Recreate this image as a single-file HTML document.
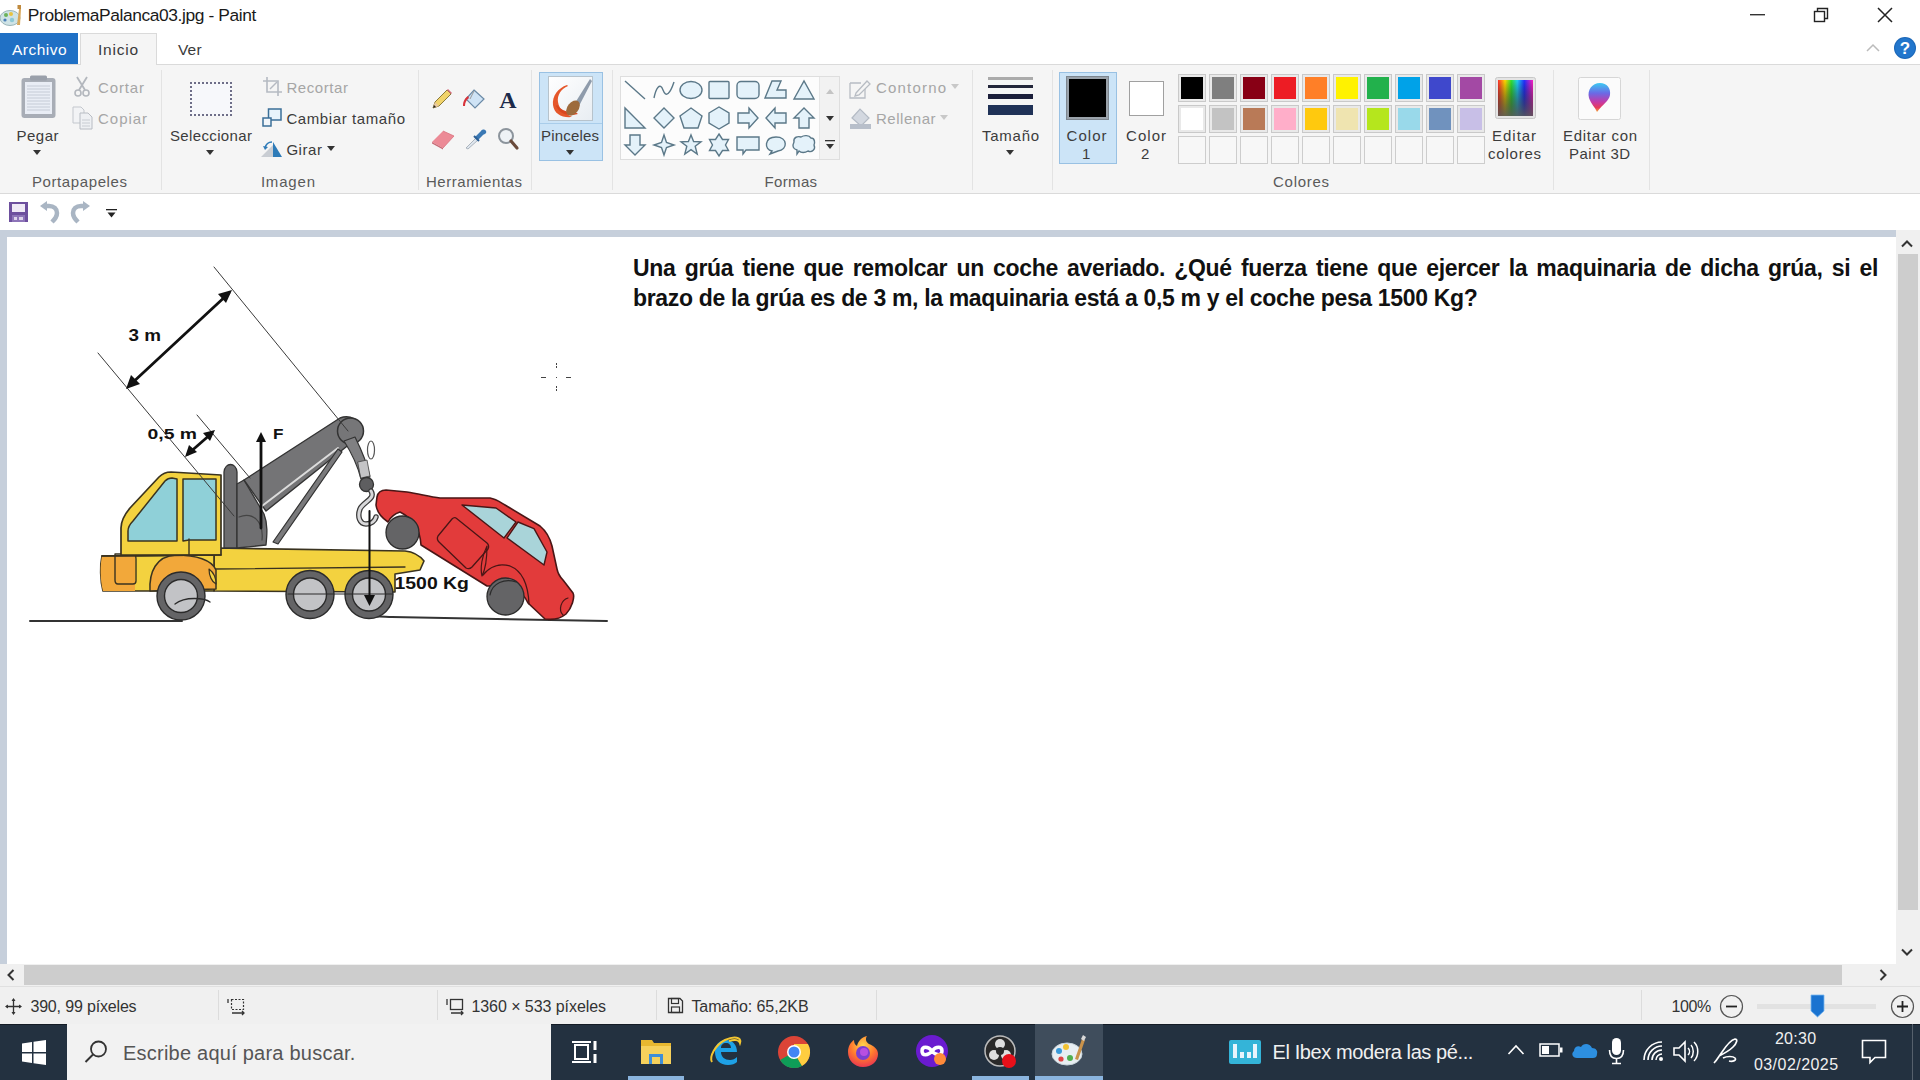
<!DOCTYPE html>
<html><head><meta charset="utf-8">
<style>
*{box-sizing:border-box;margin:0;padding:0}
html,body{width:1920px;height:1080px;overflow:hidden;background:#fff;font-family:"Liberation Sans",sans-serif;color:#222}
.a{position:absolute}
.t{position:absolute;white-space:pre;line-height:1}
svg{position:absolute;overflow:visible}
#title{left:0;top:0;width:1920px;height:33px;background:#fff}
#tabs{left:0;top:33px;width:1920px;height:32px;background:#fff}
#ribbon{left:0;top:64px;width:1920px;height:130px;background:#f5f5f5;border-top:1px solid #dadada;border-bottom:1px solid #dadada}
#qat{left:0;top:194px;width:1920px;height:36px;background:#fff}
#work{left:0;top:230px;width:1896px;height:734px;background:#c6cfdb}
#canvas{left:7px;top:237px;width:1889px;height:727px;background:#fff}
#vscroll{left:1896px;top:230px;width:24px;height:734px;background:#f0f0f0}
#hscroll{left:0;top:964px;width:1920px;height:22px;background:#f0f0f0}
#status{left:0;top:986px;width:1920px;height:38px;background:#f0f0f0;border-top:1px solid #e2e2e2}
#taskbar{left:0;top:1024px;width:1920px;height:56px;background:#233140;border-top:1px solid #141c26}

</style></head><body>
<div id="title" class="a"></div>
<div id="tabs" class="a"></div>
<div id="ribbon" class="a"></div>
<div id="qat" class="a"></div>
<div id="work" class="a"></div>
<div id="canvas" class="a"></div>
<div id="vscroll" class="a"></div>
<div id="hscroll" class="a"></div>
<div id="status" class="a"></div>
<div id="taskbar" class="a"></div>
<!-- title bar -->
<svg style="left:0;top:3px" width="24" height="24" viewBox="0 0 24 24">
 <ellipse cx="10" cy="15" rx="10" ry="7.5" fill="#cfe3e6" stroke="#9bb5b8" stroke-width="1"/>
 <circle cx="6" cy="12" r="2" fill="#6bb35a"/><circle cx="11" cy="11" r="2" fill="#e8c341"/><circle cx="5" cy="17" r="1.6" fill="#4a7fb8"/><circle cx="12" cy="17" r="2.2" fill="#8ec9d6"/>
 <path d="M17 22 L19 6 L21 6 L20 22 Z" fill="#d8a85a"/><rect x="17.5" y="2" width="3.5" height="4" fill="#c08a3e"/>
</svg>
<svg style="left:1750px;top:14px" width="15" height="2"><rect width="15" height="1.4" fill="#333"/></svg>
<svg style="left:1813px;top:7px" width="16" height="15" viewBox="0 0 16 15"><rect x="1.5" y="4.5" width="10" height="10" fill="none" stroke="#222" stroke-width="1.4"/><path d="M4.5 4.5 V1.5 H14.5 V11.5 H11.5" fill="none" stroke="#222" stroke-width="1.4"/></svg>
<svg style="left:1877px;top:7px" width="16" height="16" viewBox="0 0 16 16"><path d="M1 1 L15 15 M15 1 L1 15" stroke="#222" stroke-width="1.5"/></svg>
<!-- tabs -->
<div class="a" style="left:0;top:33px;width:78px;height:31px;background:#1f70c5"></div>
<div class="a" style="left:80px;top:33px;width:77px;height:32px;background:#f5f5f5;border:1px solid #dadada;border-bottom:none"></div>
<svg style="left:1866px;top:43px" width="14" height="9" viewBox="0 0 14 9"><path d="M1 8 L7 2 L13 8" fill="none" stroke="#bbb" stroke-width="1.5"/></svg>
<svg style="left:1893px;top:36px" width="24" height="24" viewBox="0 0 24 24"><circle cx="12" cy="12" r="11" fill="#1b67b8"/><circle cx="12" cy="12" r="10" fill="#2276cc"/><text x="12" y="18" text-anchor="middle" font-family="Liberation Sans" font-weight="bold" font-size="17" fill="#fff">?</text></svg>
<!-- ribbon group separators -->
<div class="a" style="left:161px;top:70px;width:1px;height:120px;background:#e3e3e3"></div>
<div class="a" style="left:418px;top:70px;width:1px;height:120px;background:#e3e3e3"></div>
<div class="a" style="left:531px;top:70px;width:1px;height:120px;background:#e3e3e3"></div>
<div class="a" style="left:612px;top:70px;width:1px;height:120px;background:#e3e3e3"></div>
<div class="a" style="left:972px;top:70px;width:1px;height:120px;background:#e3e3e3"></div>
<div class="a" style="left:1052px;top:70px;width:1px;height:120px;background:#e3e3e3"></div>
<div class="a" style="left:1553px;top:70px;width:1px;height:120px;background:#e3e3e3"></div>
<div class="a" style="left:1649px;top:70px;width:1px;height:120px;background:#e3e3e3"></div>
<!-- Portapapeles -->
<svg style="left:21px;top:75px" width="36" height="44" viewBox="0 0 36 44">
 <rect x="0.5" y="3" width="34" height="40" rx="3" fill="#a8adb6"/>
 <rect x="4" y="7" width="27" height="32" fill="#e9edf5"/>
 <g stroke="#c5cbd6" stroke-width="1"><path d="M6 11H29M6 14H29M6 17H29M6 20H29M6 23H29M6 26H29M6 29H29M6 32H29M6 35H29"/></g>
 <rect x="9" y="0.5" width="17" height="5" rx="1.5" fill="#9aa0aa"/>
</svg>
<svg style="left:33px;top:150px" width="8" height="5"><path d="M0 0H8L4 5Z" fill="#333"/></svg>
<svg style="left:74px;top:76px" width="16" height="21" viewBox="0 0 16 21"><path d="M3 1 L11 14 M13 1 L5 14" stroke="#b3b7bd" stroke-width="1.8"/><circle cx="4" cy="17" r="3" fill="none" stroke="#b3b7bd" stroke-width="1.6"/><circle cx="12" cy="17" r="3" fill="none" stroke="#b3b7bd" stroke-width="1.6"/></svg>
<svg style="left:72px;top:106px" width="22" height="24" viewBox="0 0 22 24"><path d="M1 1H9L12 4V17H1Z" fill="#f2f3f5" stroke="#c3c7cd"/><path d="M8 7H16L20 11V23H8Z" fill="#eef0f3" stroke="#b8bcc3"/><path d="M10 14H18M10 17H18M10 20H18" stroke="#c8ccd2"/></svg>
<!-- Imagen -->
<div class="a" style="left:190px;top:82px;width:42px;height:34px;border:2px dotted #6e6e88;background:#f7f8fb"></div>
<svg style="left:206px;top:150px" width="8" height="5"><path d="M0 0H8L4 5Z" fill="#333"/></svg>
<svg style="left:263px;top:77px" width="19" height="19" viewBox="0 0 19 19"><path d="M4 0V15H19M0 4H15V19" fill="none" stroke="#b5bac2" stroke-width="1.6"/><path d="M7 12L14 5" stroke="#b5bac2" stroke-width="1.4"/></svg>
<svg style="left:262px;top:108px" width="20" height="19" viewBox="0 0 20 19"><rect x="6.5" y="1" width="12.5" height="11" fill="#e8f4fb" stroke="#3b6f98" stroke-width="1.5"/><rect x="1" y="10" width="8" height="8" fill="#f2f6fa" stroke="#3b6f98" stroke-width="1.5"/></svg>
<svg style="left:261px;top:140px" width="22" height="18" viewBox="0 0 22 18"><path d="M0 17L12 5V17Z" fill="#c9cdd3"/><path d="M12 17V2L21 17Z" fill="#2e7bb8"/><path d="M4 8C5 4 8 2 11 2" fill="none" stroke="#2e7bb8" stroke-width="1.6"/><path d="M2 6L4 10L7 7Z" fill="#2e7bb8"/></svg>
<svg style="left:327px;top:146px" width="8" height="5"><path d="M0 0H8L4 5Z" fill="#333"/></svg>
<!-- QAT -->
<svg style="left:9px;top:202px" width="19" height="20" viewBox="0 0 19 20"><path d="M0 0 H19 V20 H0Z" fill="#6d4f9e"/><rect x="3" y="2" width="13" height="8" fill="#efe9f6"/><rect x="3" y="13" width="13" height="7" fill="#8d74b8"/><rect x="5" y="15" width="3" height="3" fill="#ddd3ec"/><rect x="10" y="15" width="4" height="3" fill="#ddd3ec"/></svg>
<svg style="left:40px;top:201px" width="20" height="22" viewBox="0 0 20 22"><path d="M5 5 H9 C14 5 17 8 17 12 C17 16 15 18 12 21" fill="none" stroke="#a9b5c3" stroke-width="4.5"/><path d="M0 5 L7 0 V10Z" fill="#a9b5c3"/></svg>
<svg style="left:70px;top:201px" width="20" height="22" viewBox="0 0 20 22"><path d="M15 5 H11 C6 5 3 8 3 12 C3 16 5 18 8 21" fill="none" stroke="#a9b5c3" stroke-width="4.5"/><path d="M20 5 L13 0 V10Z" fill="#a9b5c3"/></svg>
<svg style="left:106px;top:209px" width="11" height="9" viewBox="0 0 11 9"><rect x="0" y="0" width="11" height="1.3" fill="#222"/><path d="M1.5 3.5 H9.5 L5.5 8.5Z" fill="#222"/></svg>

<svg style="left:431px;top:88px" width="22" height="22" viewBox="0 0 22 22"><path d="M2 20 L4 14 L16 2 L20 6 L8 18 Z" fill="#f1d36b" stroke="#8a7a3a" stroke-width="1"/><path d="M16 2 L20 6 L21 5 L17 1 Z" fill="#d46b7a"/><path d="M2 20 L4 14 L8 18 Z" fill="#e9c9a0"/><path d="M2 20 L3 17 L5 19Z" fill="#222"/></svg>
<svg style="left:462px;top:87px" width="25" height="23" viewBox="0 0 25 23"><path d="M12 3 L22 12 L13 21 L4 12 Z" fill="#cfe3f5" stroke="#6b8aa6" stroke-width="1.2"/><path d="M8 12 L12 4" stroke="#999" stroke-width="1"/><path d="M1 19 C1 14 3 11 6 9 L7 11 C4 13 3 16 3 19 Z" fill="#d8333a"/></svg>
<svg style="left:497px;top:89px" width="22" height="20" viewBox="0 0 22 20"><text x="11" y="19" text-anchor="middle" font-family="Liberation Serif" font-weight="bold" font-size="24" fill="#1c2a4a">A</text></svg>
<svg style="left:431px;top:128px" width="24" height="22" viewBox="0 0 24 22"><path d="M1 14 L12 3 L23 8 L12 20 Z" fill="#ec8a96"/><path d="M1 14 L12 20 L12 21.5 L1 15.5Z" fill="#c76a75"/><path d="M12 3 L23 8 L12 20" fill="none" stroke="#d9707c" stroke-width="0.8"/></svg>
<svg style="left:464px;top:127px" width="23" height="23" viewBox="0 0 23 23"><path d="M2 21 L12 11 L14 13 L4 22Z" fill="#dfe6ee" stroke="#9aa4b0" stroke-width="0.8"/><path d="M11 10 L17 4 C18 2 21 2 22 4 C23 6 21 7 19 8 L14 13Z" fill="#3a78b4"/><path d="M10 9 L15 14" stroke="#2c5f94" stroke-width="2"/></svg>
<svg style="left:497px;top:127px" width="22" height="24" viewBox="0 0 22 24"><circle cx="9" cy="9" r="7" fill="#eef2f6" stroke="#8c949c" stroke-width="2"/><path d="M14 14 L20 21" stroke="#6a4a3a" stroke-width="3.2" stroke-linecap="round"/></svg>
<div class="a" style="left:539px;top:72px;width:64px;height:89px;background:#cce4f7;border:1px solid #99c1e3"></div>
<div class="a" style="left:540px;top:123px;width:62px;height:1px;background:#a9cdea"></div>
<svg style="left:548px;top:76px" width="45" height="45" viewBox="0 0 45 45"><defs><linearGradient id="bw" x1="0" y1="0" x2="1" y2="1"><stop offset="0" stop-color="#ffffff"/><stop offset="1" stop-color="#e8edf2"/></linearGradient></defs><rect x="0.5" y="0.5" width="44" height="44" fill="url(#bw)" stroke="#b7c3cc"/><path d="M19 9 C10 12 4 20 5 29 C6 38 14 42 24 41 C18 38 11 34 10 26 C9 19 13 13 20 10Z" fill="#e5572b"/><path d="M8 30 C12 38 20 41 30 38 L26 35 C20 37 14 35 9 29Z" fill="#d9471f"/><path d="M27 27 L42 3 L44 5 L31 30Z" fill="#8e9bab"/><ellipse cx="25" cy="32" rx="8.5" ry="5.5" transform="rotate(-52 25 32)" fill="#9d6b3d"/></svg>
<svg style="left:566px;top:150px" width="8" height="5"><path d="M0 0H8L4 5Z" fill="#333"/></svg>
<div class="a" style="left:620px;top:76px;width:220px;height:84px;background:#fcfcfc;border:1px solid #dedede"></div>
<div class="a" style="left:819px;top:77px;width:20px;height:82px;background:#f2f2f2;border-left:1px solid #e6e6e6"></div>
<svg style="left:826px;top:89px" width="8" height="5"><path d="M0 5H8L4 0Z" fill="#c4c4c4"/></svg>
<svg style="left:826px;top:116px" width="8" height="5"><path d="M0 0H8L4 5Z" fill="#333"/></svg>
<svg style="left:825px;top:140px" width="10" height="10"><rect x="0" y="0" width="10" height="1.3" fill="#333"/><path d="M1 4H9L5 9Z" fill="#333"/></svg>
<svg style="left:623.00px;top:77.60px" width="24" height="24" viewBox="-12 -12 24 24"><path d="M-10 -9 L10 9" stroke="#5b7888" stroke-width="1.4"/></svg>
<svg style="left:651.75px;top:77.60px" width="24" height="24" viewBox="-12 -12 24 24"><path d="M-10 8 C-8 -2 -4 -8 -1 0 C2 8 6 4 10 -8" fill="none" stroke="#5b7888" stroke-width="1.4"/></svg>
<svg style="left:679.25px;top:77.60px" width="24" height="24" viewBox="-12 -12 24 24"><ellipse cx="0" cy="0" rx="11" ry="8.5" stroke="#5b7888" stroke-width="1.4" fill="#e4f2fa"/></svg>
<svg style="left:706.75px;top:77.60px" width="24" height="24" viewBox="-12 -12 24 24"><rect x="-10" y="-8.5" width="20" height="17" rx="1" stroke="#5b7888" stroke-width="1.4" fill="#e4f2fa"/></svg>
<svg style="left:735.50px;top:77.60px" width="24" height="24" viewBox="-12 -12 24 24"><rect x="-11" y="-8.5" width="22" height="17" rx="4" stroke="#5b7888" stroke-width="1.4" fill="#e4f2fa"/></svg>
<svg style="left:764.25px;top:77.60px" width="24" height="24" viewBox="-12 -12 24 24"><path d="M-11 8 L-4 -9 H5 L1 0 H10 V8Z" stroke="#5b7888" stroke-width="1.4" fill="#e4f2fa"/></svg>
<svg style="left:791.75px;top:77.60px" width="24" height="24" viewBox="-12 -12 24 24"><path d="M-10 9 L0 -9 L10 9Z" stroke="#5b7888" stroke-width="1.4" fill="#e4f2fa"/></svg>
<svg style="left:623.00px;top:105.75px" width="24" height="24" viewBox="-12 -12 24 24"><path d="M-10 -10 V10 H10Z" stroke="#5b7888" stroke-width="1.4" fill="#e4f2fa"/></svg>
<svg style="left:651.75px;top:105.75px" width="24" height="24" viewBox="-12 -12 24 24"><path d="M0 -10 L10 0 L0 10 L-10 0Z" stroke="#5b7888" stroke-width="1.4" fill="#e4f2fa"/></svg>
<svg style="left:679.25px;top:105.75px" width="24" height="24" viewBox="-12 -12 24 24"><path d="M0 -10 L11 -2 L7 10 H-7 L-11 -2Z" stroke="#5b7888" stroke-width="1.4" fill="#e4f2fa"/></svg>
<svg style="left:706.75px;top:105.75px" width="24" height="24" viewBox="-12 -12 24 24"><path d="M-10 -5 L0 -11 L10 -5 V5 L0 11 L-10 5Z" stroke="#5b7888" stroke-width="1.4" fill="#e4f2fa"/></svg>
<svg style="left:735.50px;top:105.75px" width="24" height="24" viewBox="-12 -12 24 24"><path d="M-10 -5 H1 V-10 L10 0 L1 10 V5 H-10Z" stroke="#5b7888" stroke-width="1.4" fill="#e4f2fa"/></svg>
<svg style="left:764.25px;top:105.75px" width="24" height="24" viewBox="-12 -12 24 24"><path d="M10 -5 H-1 V-10 L-10 0 L-1 10 V5 H10Z" stroke="#5b7888" stroke-width="1.4" fill="#e4f2fa"/></svg>
<svg style="left:791.75px;top:105.75px" width="24" height="24" viewBox="-12 -12 24 24"><path d="M-5 10 V0 H-10 L0 -10 L10 0 H5 V10Z" stroke="#5b7888" stroke-width="1.4" fill="#e4f2fa"/></svg>
<svg style="left:623.00px;top:133.25px" width="24" height="24" viewBox="-12 -12 24 24"><path d="M-5 -10 V0 H-10 L0 10 L10 0 H5 V-10Z" stroke="#5b7888" stroke-width="1.4" fill="#e4f2fa"/></svg>
<svg style="left:651.75px;top:133.25px" width="24" height="24" viewBox="-12 -12 24 24"><path d="M0 -10 L2.5 -2.5 L10 0 L2.5 2.5 L0 10 L-2.5 2.5 L-10 0 L-2.5 -2.5Z" stroke="#5b7888" stroke-width="1.4" fill="#e4f2fa"/></svg>
<svg style="left:679.25px;top:133.25px" width="24" height="24" viewBox="-12 -12 24 24"><path d="M0 -10 L2.6 -3.5 L10 -3.2 L4.2 1.3 L6.2 9 L0 4.7 L-6.2 9 L-4.2 1.3 L-10 -3.2 L-2.6 -3.5Z" stroke="#5b7888" stroke-width="1.4" fill="#e4f2fa"/></svg>
<svg style="left:706.75px;top:133.25px" width="24" height="24" viewBox="-12 -12 24 24"><path d="M0 -11 L3.5 -5.5 L9.5 -5.5 L6.5 0 L9.5 5.5 L3.5 5.5 L0 11 L-3.5 5.5 L-9.5 5.5 L-6.5 0 L-9.5 -5.5 L-3.5 -5.5Z" stroke="#5b7888" stroke-width="1.4" fill="#e4f2fa"/></svg>
<svg style="left:735.50px;top:133.25px" width="24" height="24" viewBox="-12 -12 24 24"><path d="M-11 -8 H11 V5 H-2 L-5 9 L-5 5 H-11Z" stroke="#5b7888" stroke-width="1.4" fill="#e4f2fa"/></svg>
<svg style="left:764.25px;top:133.25px" width="24" height="24" viewBox="-12 -12 24 24"><path d="M-4 6 C-12 5 -12 -8 0 -8 C12 -8 12 5 2 6 L-6 9Z" stroke="#5b7888" stroke-width="1.4" fill="#e4f2fa"/></svg>
<svg style="left:791.75px;top:133.25px" width="24" height="24" viewBox="-12 -12 24 24"><path d="M-10 -3 C-11 -8 -6 -9 -3 -8 C0 -10 5 -10 7 -7 C11 -7 11 -2 10 0 C12 4 8 8 4 6 C1 8 -3 8 -5 6 L-7 9 L-7 5 C-11 4 -12 1 -10 -3Z" stroke="#5b7888" stroke-width="1.4" fill="#e4f2fa"/></svg>
<svg style="left:849px;top:79px" width="22" height="20" viewBox="0 0 22 20"><path d="M1 4 H12 M1 4 V19 H16 V10" fill="none" stroke="#b7bcc3" stroke-width="1.3"/><path d="M7 14 L18 2 L21 5 L10 16 L6 17Z" fill="none" stroke="#b7bcc3" stroke-width="1.3"/></svg>
<svg style="left:951px;top:84px" width="8" height="5"><path d="M0 0H8L4 5Z" fill="#c8c8c8"/></svg>
<svg style="left:849px;top:106px" width="23" height="24" viewBox="0 0 23 24"><path d="M3 12 L11 3 L20 12 L12 20Z" fill="#d3d8e0" stroke="#b3bac4" stroke-width="1.2"/><rect x="1" y="18" width="21" height="5" fill="#b8bfca"/></svg>
<svg style="left:940px;top:115px" width="8" height="5"><path d="M0 0H8L4 5Z" fill="#c8c8c8"/></svg>
<div class="a" style="left:988px;top:77px;width:45px;height:3px;background:#ababab"></div>
<div class="a" style="left:988px;top:85px;width:45px;height:3px;background:#23263a"></div>
<div class="a" style="left:988px;top:94px;width:45px;height:5px;background:#1b1e3a"></div>
<div class="a" style="left:988px;top:105px;width:45px;height:10px;background:#1f3257"></div>
<svg style="left:1006px;top:150px" width="8" height="5"><path d="M0 0H8L4 5Z" fill="#333"/></svg>
<div class="a" style="left:1059px;top:72px;width:58px;height:92px;background:#cce4f7;border:1px solid #99c1e3"></div>
<div class="a" style="left:1066px;top:76px;width:43px;height:44px;background:#9aa2aa;border:1px solid #7d868f"></div>
<div class="a" style="left:1069px;top:79px;width:37px;height:38px;background:#000"></div>
<div class="a" style="left:1129px;top:81px;width:35px;height:35px;background:#fff;border:1px solid #a0a0a0"></div>
<div class="a" style="left:1177.6px;top:73.5px;width:28px;height:28px;background:#e9e9e9;border:1px solid #c9c9c9"></div><div class="a" style="left:1180.6px;top:76.5px;width:22px;height:22px;background:#000000"></div>
<div class="a" style="left:1177.6px;top:104.5px;width:28px;height:28px;background:#e9e9e9;border:1px solid #c9c9c9"></div><div class="a" style="left:1180.6px;top:107.5px;width:22px;height:22px;background:#ffffff"></div>
<div class="a" style="left:1177.6px;top:135.5px;width:28px;height:28px;background:#f7f7f7;border:1px solid #cdcdcd"></div>
<div class="a" style="left:1208.6px;top:73.5px;width:28px;height:28px;background:#e9e9e9;border:1px solid #c9c9c9"></div><div class="a" style="left:1211.6px;top:76.5px;width:22px;height:22px;background:#7f7f7f"></div>
<div class="a" style="left:1208.6px;top:104.5px;width:28px;height:28px;background:#e9e9e9;border:1px solid #c9c9c9"></div><div class="a" style="left:1211.6px;top:107.5px;width:22px;height:22px;background:#c3c3c3"></div>
<div class="a" style="left:1208.6px;top:135.5px;width:28px;height:28px;background:#f7f7f7;border:1px solid #cdcdcd"></div>
<div class="a" style="left:1239.6px;top:73.5px;width:28px;height:28px;background:#e9e9e9;border:1px solid #c9c9c9"></div><div class="a" style="left:1242.6px;top:76.5px;width:22px;height:22px;background:#880015"></div>
<div class="a" style="left:1239.6px;top:104.5px;width:28px;height:28px;background:#e9e9e9;border:1px solid #c9c9c9"></div><div class="a" style="left:1242.6px;top:107.5px;width:22px;height:22px;background:#b97a57"></div>
<div class="a" style="left:1239.6px;top:135.5px;width:28px;height:28px;background:#f7f7f7;border:1px solid #cdcdcd"></div>
<div class="a" style="left:1270.6px;top:73.5px;width:28px;height:28px;background:#e9e9e9;border:1px solid #c9c9c9"></div><div class="a" style="left:1273.6px;top:76.5px;width:22px;height:22px;background:#ed1c24"></div>
<div class="a" style="left:1270.6px;top:104.5px;width:28px;height:28px;background:#e9e9e9;border:1px solid #c9c9c9"></div><div class="a" style="left:1273.6px;top:107.5px;width:22px;height:22px;background:#ffaec9"></div>
<div class="a" style="left:1270.6px;top:135.5px;width:28px;height:28px;background:#f7f7f7;border:1px solid #cdcdcd"></div>
<div class="a" style="left:1301.6px;top:73.5px;width:28px;height:28px;background:#e9e9e9;border:1px solid #c9c9c9"></div><div class="a" style="left:1304.6px;top:76.5px;width:22px;height:22px;background:#ff7f27"></div>
<div class="a" style="left:1301.6px;top:104.5px;width:28px;height:28px;background:#e9e9e9;border:1px solid #c9c9c9"></div><div class="a" style="left:1304.6px;top:107.5px;width:22px;height:22px;background:#ffc90e"></div>
<div class="a" style="left:1301.6px;top:135.5px;width:28px;height:28px;background:#f7f7f7;border:1px solid #cdcdcd"></div>
<div class="a" style="left:1332.6px;top:73.5px;width:28px;height:28px;background:#e9e9e9;border:1px solid #c9c9c9"></div><div class="a" style="left:1335.6px;top:76.5px;width:22px;height:22px;background:#fff200"></div>
<div class="a" style="left:1332.6px;top:104.5px;width:28px;height:28px;background:#e9e9e9;border:1px solid #c9c9c9"></div><div class="a" style="left:1335.6px;top:107.5px;width:22px;height:22px;background:#efe4b0"></div>
<div class="a" style="left:1332.6px;top:135.5px;width:28px;height:28px;background:#f7f7f7;border:1px solid #cdcdcd"></div>
<div class="a" style="left:1363.6px;top:73.5px;width:28px;height:28px;background:#e9e9e9;border:1px solid #c9c9c9"></div><div class="a" style="left:1366.6px;top:76.5px;width:22px;height:22px;background:#22b14c"></div>
<div class="a" style="left:1363.6px;top:104.5px;width:28px;height:28px;background:#e9e9e9;border:1px solid #c9c9c9"></div><div class="a" style="left:1366.6px;top:107.5px;width:22px;height:22px;background:#b5e61d"></div>
<div class="a" style="left:1363.6px;top:135.5px;width:28px;height:28px;background:#f7f7f7;border:1px solid #cdcdcd"></div>
<div class="a" style="left:1394.6px;top:73.5px;width:28px;height:28px;background:#e9e9e9;border:1px solid #c9c9c9"></div><div class="a" style="left:1397.6px;top:76.5px;width:22px;height:22px;background:#00a2e8"></div>
<div class="a" style="left:1394.6px;top:104.5px;width:28px;height:28px;background:#e9e9e9;border:1px solid #c9c9c9"></div><div class="a" style="left:1397.6px;top:107.5px;width:22px;height:22px;background:#99d9ea"></div>
<div class="a" style="left:1394.6px;top:135.5px;width:28px;height:28px;background:#f7f7f7;border:1px solid #cdcdcd"></div>
<div class="a" style="left:1425.6px;top:73.5px;width:28px;height:28px;background:#e9e9e9;border:1px solid #c9c9c9"></div><div class="a" style="left:1428.6px;top:76.5px;width:22px;height:22px;background:#3f48cc"></div>
<div class="a" style="left:1425.6px;top:104.5px;width:28px;height:28px;background:#e9e9e9;border:1px solid #c9c9c9"></div><div class="a" style="left:1428.6px;top:107.5px;width:22px;height:22px;background:#7092be"></div>
<div class="a" style="left:1425.6px;top:135.5px;width:28px;height:28px;background:#f7f7f7;border:1px solid #cdcdcd"></div>
<div class="a" style="left:1456.6px;top:73.5px;width:28px;height:28px;background:#e9e9e9;border:1px solid #c9c9c9"></div><div class="a" style="left:1459.6px;top:76.5px;width:22px;height:22px;background:#a349a4"></div>
<div class="a" style="left:1456.6px;top:104.5px;width:28px;height:28px;background:#e9e9e9;border:1px solid #c9c9c9"></div><div class="a" style="left:1459.6px;top:107.5px;width:22px;height:22px;background:#c8bfe7"></div>
<div class="a" style="left:1456.6px;top:135.5px;width:28px;height:28px;background:#f7f7f7;border:1px solid #cdcdcd"></div>
<svg style="left:1495px;top:77px" width="41" height="42" viewBox="0 0 41 42"><defs><linearGradient id="rb" x1="0" x2="1"><stop offset="0" stop-color="#ff3030"/><stop offset=".2" stop-color="#ffd800"/><stop offset=".38" stop-color="#30e030"/><stop offset=".55" stop-color="#20d0f0"/><stop offset=".75" stop-color="#2030ff"/><stop offset="1" stop-color="#ff20c0"/></linearGradient><linearGradient id="dk" x1="0" y1="0" x2="0" y2="1"><stop offset="0" stop-color="#000" stop-opacity="0"/><stop offset="1" stop-color="#555" stop-opacity=".9"/></linearGradient></defs><rect x="0.5" y="0.5" width="40" height="41" rx="2" fill="#e4e4e4" stroke="#c8c8c8"/><rect x="3" y="3" width="35" height="36" fill="url(#rb)"/><rect x="3" y="3" width="35" height="36" fill="url(#dk)"/></svg>
<svg style="left:1578px;top:77px" width="43" height="43" viewBox="0 0 43 43"><defs><linearGradient id="p3" x1="0" y1="0" x2="0" y2="1"><stop offset="0" stop-color="#3ccaf2"/><stop offset=".35" stop-color="#6a6ae6"/><stop offset=".65" stop-color="#c23aa8"/><stop offset=".85" stop-color="#e83a5a"/><stop offset="1" stop-color="#f0a83a"/></linearGradient></defs><rect x="0.5" y="0.5" width="42" height="42" rx="2" fill="#fbfbfb" stroke="#d6d6d6"/><path d="M22 6 C29 6 33 11 32 18 C31 24 25 27 19 35 C17 30 13 27 11 21 C9 13 14 6 22 6Z" fill="url(#p3)"/></svg>
<svg style="left:0;top:0" width="640" height="660" viewBox="0 0 640 660">
<g fill="none" stroke-linejoin="round" stroke-linecap="round">
 <!-- ground -->
 <path d="M30 621 H182 M372 617 C380 616 385 617 392 617 L607 621" stroke="#333" stroke-width="2"/>
 <!-- flatbed -->
 <path d="M214 548 L405 551 C415 552 420 556 424 561 L420 570 L395 574 L395 592 L214 591Z" fill="#f3d23f" stroke="#3a3320" stroke-width="1.6"/>
 <path d="M214 569 L405 567" stroke="#3a3320" stroke-width="1.3"/>
 <!-- bumper/front -->
 <path d="M102 556 L214 555 L214 591 L103 591 C100 580 100 565 102 556Z" fill="#f3d23f" stroke="#3a3320" stroke-width="1.6"/>
 <path d="M102 556 L135 556 L135 591 L103 591 C100 580 100 565 102 556Z" fill="#f2a83a"/>
 <path d="M150 591 C149 572 156 556 176 555 C196 555 212 560 216 570 V589 Z" fill="#f2a83a" stroke="#3a3320" stroke-width="1.5"/>
 <path d="M102 556 L214 555" stroke="#3a3320" stroke-width="1.6"/>
 <path d="M115 554 H133 C135 554 136 556 136 559 V581 C136 583 135 584 133 584 H118 C116 584 115 582 115 580Z" stroke="#3a3320" stroke-width="1.4"/>
 <path d="M209 569 C213 572 216 578 216 584 C212 582 209 576 209 569Z" fill="#f3d23f" stroke="#3a3320" stroke-width="1.2"/>
 <!-- cab -->
 <path d="M121 555 V528 C121 520 125 514 130 508 L159 477 C162 474 166 472 171 472 L221 475 V555Z" fill="#f3d23f" stroke="#3a3320" stroke-width="1.7"/>
 <path d="M128 541 V531 C128 527 130 524 133 521 L165 481 C167 479 169 478 172 478 L177 479 V541Z" fill="#8fd0d8" stroke="#3a3320" stroke-width="1.5"/>
 <path d="M183 479 H216 V540 H189 L183 541Z" fill="#8fd0d8" stroke="#3a3320" stroke-width="1.5"/>
 <path d="M189 539 V555" stroke="#3a3320" stroke-width="1.4"/>
 <path d="M102 556 L221 555" stroke="#3a3320" stroke-width="1.6"/>
 <!-- crane post & base -->
 <path d="M224 548 L224 472 C225 462 236 462 237 472 L237 548Z" fill="#6d6d6f" stroke="#333" stroke-width="1.3"/>
 <path d="M237 548 V484 L244 480 L264 514 C268 524 267 535 266 545 L237 548Z" fill="#707072" stroke="#333" stroke-width="1.3"/>
 <path d="M239 517 C252 512 264 520 262 540" stroke="#444" stroke-width="1.2"/>
 <!-- boom -->
 <path d="M244 480 L340 418 C350 414 360 420 362 430 L346 447 L266 511Z" fill="#747476" stroke="#333" stroke-width="1.4"/>
 <path d="M262 506 L338 448" stroke="#dcdcdc" stroke-width="2"/>
 <!-- strut -->
 <path d="M273 542 L338 449 L342 452 L278 544Z" fill="#7a7a7c" stroke="#333" stroke-width="1.2"/>
 <!-- pivot -->
 <circle cx="350.5" cy="431" r="13" fill="#767678" stroke="#333" stroke-width="1.5"/>
 <!-- hook arm -->
 <path d="M344 441 C351 452 357 463 361 479 L370 477 C367 462 361 449 355 437Z" fill="#808082" stroke="#333" stroke-width="1.2"/>
 <path d="M358 462 L367 460 L370 476 L361 478Z" fill="#c4c4c6" stroke="#444" stroke-width="0.8"/>
 <ellipse cx="371" cy="450" rx="3.5" ry="9" fill="none" stroke="#555" stroke-width="1.2"/>
 <circle cx="366.5" cy="484.5" r="7" fill="#5e5e60" stroke="#333" stroke-width="1.3"/>
 <path d="M371 491 C376 499 363 502 360 509 C357 517 360 524 366 524 C371 524 375 521 376 517" fill="none" stroke="#3a3a3a" stroke-width="5.5"/>
 <path d="M371 491 C376 499 363 502 360 509 C357 517 360 524 366 524 C371 524 375 521 376 517" fill="none" stroke="#d8d8da" stroke-width="3"/>
 <!-- truck wheels -->
 <g stroke="#2b2b2b" stroke-width="1.4">
  <circle cx="181" cy="596" r="24" fill="#646466"/><circle cx="181" cy="596" r="16.5" fill="#c2c3c6"/>
  <circle cx="310" cy="594.5" r="24" fill="#646466"/><circle cx="310" cy="594.5" r="16.5" fill="#c2c3c6"/>
  <circle cx="369" cy="594.5" r="24" fill="#646466"/><circle cx="369" cy="594.5" r="16.5" fill="#c2c3c6"/>
 </g>
 <path d="M175 604 C185 596 205 598 210 602" stroke="#2b2b2b" stroke-width="1.3"/>
 <path d="M288 594 H392" stroke="#2b2b2b" stroke-width="1.1"/>
 <!-- car -->
 <path d="M377 497 C378 492 381 490 386 490 L407 492 C420 494 430 497 440 498 L490 498 C496 499 500 502 505 505 L540 526 C546 531 550 538 552 546 L557 569 C558 574 560 577 563 580 L573 593 C575 597 572 608 566 614 C560 619 552 620 545 619 L528 603 C522 590 508 582 496 586 L487 586 L421 545 C420 528 412 518 400 512 C394 514 390 518 388 522 C382 518 377 512 376 505 Z" fill="#e23b3b" stroke="#4a1616" stroke-width="1.6"/>
 <path d="M462 505 L496 508 L516 522 L504 538Z" fill="#a9d4d9" stroke="#4a1616" stroke-width="1.4"/>
 <path d="M507 538 L518 522 L534 528.6 L547 552 L544 565Z" fill="#a9d4d9" stroke="#4a1616" stroke-width="1.4"/>
 <path d="M456 518 L487 543 C489 545 489 547 488 549 L472 567 C470 569 468 569 466 568 L439 542 C437 540 437 538 438 536 L452 519 C453 518 455 517 456 518Z" stroke="#4a1616" stroke-width="1.3"/>
 <path d="M487 546 C482 556 480 568 482 576 C485 570 487 558 487 546Z" stroke="#4a1616" stroke-width="1.2"/>
 <path d="M483 575 C490 566 500 563 510 566 C520 570 528 580 529 604" stroke="#4a1616" stroke-width="1.3"/>
 <path d="M568 598 C561 600 558 610 563 615" stroke="#4a1616" stroke-width="1.2"/>
 <circle cx="402.5" cy="532.5" r="16.5" fill="#646466" stroke="#2b2b2b" stroke-width="1.3"/>
 <circle cx="505.5" cy="596.5" r="18.5" fill="#646466" stroke="#2b2b2b" stroke-width="1.3"/>
 <path d="M490 595 C492 583 505 578 516 582" stroke="#2b2b2b" stroke-width="1.2"/>
 <!-- dimension lines -->
 <path d="M214 267 L348 431" stroke="#3a3a3a" stroke-width="1"/>
 <path d="M98 353 L234 516" stroke="#3a3a3a" stroke-width="1"/>
 <path d="M197 415 L250 478" stroke="#3a3a3a" stroke-width="1"/>
 <path d="M130 385 L229 293" stroke="#111" stroke-width="2.8"/>
 <path d="M188 454 L212 433" stroke="#111" stroke-width="2.8"/>
 <path d="M261 528 V440" stroke="#111" stroke-width="2.8"/>
 <path d="M369.5 511 V598" stroke="#111" stroke-width="2"/>
</g>
<g fill="#111">
 <path d="M232 290 L218 294 L226 303Z"/>
 <path d="M126 389 L131 375 L140 384Z"/>
 <path d="M215 430 L203 433 L210 441Z"/>
 <path d="M185 457 L189 445 L197 452Z"/>
 <path d="M261 432 L256 442 L266 442Z"/>
 <path d="M369.5 606 L364 595 L375 595Z"/>
</g>
<g font-family="Liberation Sans" font-weight="bold" fill="#111">
 <text x="128.5" y="341" font-size="15.8" textLength="32.5" lengthAdjust="spacingAndGlyphs">3 m</text>
 <text x="147.5" y="438.6" font-size="15" textLength="49.5" lengthAdjust="spacingAndGlyphs">0,5 m</text>
 <text x="273" y="439" font-size="15" textLength="10.5" lengthAdjust="spacingAndGlyphs">F</text>
 <text x="394.5" y="588.8" font-size="16.5" textLength="74.5" lengthAdjust="spacingAndGlyphs">1500 Kg</text>
</g>
<!-- cursor crosshair -->
<g stroke="#444" stroke-width="1">
 <path d="M556.5 363 V365 M556.5 366 V368 M556.5 386 V388 M556.5 389 V391 M541 377.5 H546 M566 377.5 H571"/>
 <rect x="556" y="377" width="1" height="1" fill="#444" stroke="none"/>
</g>
</svg>

<!-- vertical scrollbar -->
<svg style="left:1900px;top:239px" width="14" height="9" viewBox="0 0 14 9"><path d="M2 7.5 L7 2.5 L12 7.5" fill="none" stroke="#333" stroke-width="2"/></svg>
<div class="a" style="left:1898px;top:254px;width:20px;height:656px;background:#cdcdcd"></div>
<svg style="left:1900px;top:948px" width="14" height="9" viewBox="0 0 14 9"><path d="M2 1.5 L7 6.5 L12 1.5" fill="none" stroke="#333" stroke-width="2"/></svg>
<!-- horizontal scrollbar -->
<div class="a" style="left:24px;top:965px;width:1818px;height:20px;background:#cdcdcd"></div>
<svg style="left:6px;top:968px" width="9" height="14" viewBox="0 0 9 14"><path d="M7.5 2 L2.5 7 L7.5 12" fill="none" stroke="#333" stroke-width="2"/></svg>
<svg style="left:1879px;top:968px" width="9" height="14" viewBox="0 0 9 14"><path d="M1.5 2 L6.5 7 L1.5 12" fill="none" stroke="#333" stroke-width="2"/></svg>
<!-- status bar -->
<div class="a" style="left:0;top:986px;width:1920px;height:1px;background:#e0e0e0"></div>
<div class="a" style="left:218px;top:990px;width:1px;height:30px;background:#dcdcdc"></div>
<div class="a" style="left:437px;top:990px;width:1px;height:30px;background:#dcdcdc"></div>
<div class="a" style="left:656px;top:990px;width:1px;height:30px;background:#dcdcdc"></div>
<div class="a" style="left:876px;top:990px;width:1px;height:30px;background:#dcdcdc"></div>
<div class="a" style="left:1641px;top:990px;width:1px;height:30px;background:#dcdcdc"></div>
<svg style="left:5px;top:998px" width="17" height="17" viewBox="0 0 17 17"><path d="M8.5 1 V16 M1 8.5 H16" stroke="#333" stroke-width="1.3"/><path d="M8.5 0 L6.5 3 H10.5Z M8.5 17 L6.5 14 H10.5Z M0 8.5 L3 6.5 V10.5Z M17 8.5 L14 6.5 V10.5Z" fill="#333"/></svg>
<svg style="left:226px;top:997px" width="21" height="20" viewBox="0 0 21 20"><path d="M2 2 V6" stroke="#333" stroke-width="1.3"/><rect x="5.5" y="2.5" width="12" height="10" fill="none" stroke="#333" stroke-width="1.2" stroke-dasharray="2 1.5"/><path d="M6 16 H18 M16 14 L18 16 L16 18" fill="none" stroke="#333" stroke-width="1.3"/></svg>
<svg style="left:445px;top:997px" width="21" height="20" viewBox="0 0 21 20"><path d="M2 2 V8" stroke="#333" stroke-width="1.3"/><rect x="5.5" y="2.5" width="12" height="10" fill="none" stroke="#333" stroke-width="1.3"/><path d="M6 16 H18 M16 14 L18 16 L16 18" fill="none" stroke="#333" stroke-width="1.3"/></svg>
<svg style="left:667px;top:997px" width="17" height="17" viewBox="0 0 17 17"><path d="M1.5 1.5 H13 L15.5 4 V15.5 H1.5Z" fill="none" stroke="#333" stroke-width="1.3"/><rect x="4.5" y="1.5" width="7" height="5" fill="none" stroke="#333" stroke-width="1.2"/><rect x="4.5" y="10" width="8" height="5.5" fill="none" stroke="#333" stroke-width="1.2"/></svg>
<svg style="left:1719px;top:994px" width="25" height="25" viewBox="0 0 25 25"><circle cx="12.5" cy="12.5" r="11" fill="none" stroke="#555" stroke-width="1.2"/><path d="M7 12.5 H18" stroke="#222" stroke-width="1.8"/></svg>
<div class="a" style="left:1757px;top:1004px;width:119px;height:5px;background:#e2e2e2"></div>
<svg style="left:1810px;top:994px" width="15" height="24" viewBox="0 0 15 24"><path d="M1 1 H14 V17 L7.5 23 L1 17Z" fill="#1a73d0" stroke="#7ab8f0" stroke-width="0.8"/></svg>
<svg style="left:1890px;top:994px" width="25" height="25" viewBox="0 0 25 25"><circle cx="12.5" cy="12.5" r="11" fill="none" stroke="#555" stroke-width="1.2"/><path d="M7 12.5 H18 M12.5 7 V18" stroke="#222" stroke-width="1.8"/></svg>
<!-- taskbar -->
<div class="a" style="left:67px;top:1024px;width:484px;height:56px;background:#f2f2f2"></div>
<svg style="left:22px;top:1040px" width="24" height="25" viewBox="0 0 24 25"><path d="M0 3.5 L10 2 V12 H0Z M11.5 1.8 L24 0 V12 H11.5Z M0 13.5 H10 V23 L0 21.5Z M11.5 13.5 H24 V25 L11.5 23.2Z" fill="#fff"/></svg>
<svg style="left:84px;top:1039px" width="25" height="25" viewBox="0 0 25 25"><circle cx="14.5" cy="10" r="7.5" fill="none" stroke="#333" stroke-width="1.8"/><path d="M9 15.5 L1.5 23" stroke="#333" stroke-width="2"/></svg>
<svg style="left:571px;top:1040px" width="28" height="24" viewBox="0 0 28 24"><rect x="4" y="5" width="13" height="14" fill="none" stroke="#fff" stroke-width="2"/><path d="M1 2 H20 M1 22 H20" stroke="#fff" stroke-width="2"/><path d="M24 1 V10 M24 14 V23" stroke="#fff" stroke-width="3"/></svg>
<div class="a" style="left:628px;top:1076px;width:56px;height:4px;background:#8ab4de"></div>
<svg style="left:640px;top:1037px" width="32" height="28" viewBox="0 0 32 28"><path d="M1 3 H12 L14 6 H31 V27 H1Z" fill="#e8b830"/><path d="M1 9 H31 V27 H1Z" fill="#f6d15c"/><rect x="9" y="17" width="14" height="10" fill="#3e8ed8"/><rect x="12" y="20" width="8" height="7" fill="#f6d15c"/></svg>
<svg style="left:709px;top:1035px" width="33" height="33" viewBox="0 0 33 33"><path d="M6 17 C6 9 11 5 17 5 C24 5 28 10 28 17 H12 C12 22 16 25 21 25 C24 25 26 24 28 22 V27 C26 29 23 30 19 30 C11 30 6 25 6 17Z M12 13 H22 C22 10 20 8 17 8 C14 8 12 10 12 13Z" fill="#1ea1e6"/><path d="M3 27 C0 22 6 10 16 5 C25 1 33 2 31 8 C30 5 26 4 20 6" fill="none" stroke="#f2c531" stroke-width="2"/></svg>
<svg style="left:777px;top:1035px" width="34" height="34" viewBox="0 0 34 34"><circle cx="17" cy="17" r="16" fill="#db4437"/><path d="M17 17 L3.1 25 A16 16 0 0 0 25 30.9Z" fill="#0f9d58"/><path d="M17 17 L25 30.9 A16 16 0 0 0 30.9 9 L17 9Z" fill="#ffcd40"/><path d="M3.1 25 A16 16 0 0 1 3.1 9 L17 9" fill="none"/><circle cx="17" cy="17" r="7" fill="#fff"/><circle cx="17" cy="17" r="5.5" fill="#4285f4"/></svg>
<svg style="left:846px;top:1034px" width="34" height="34" viewBox="0 0 34 34"><defs><radialGradient id="ffg" cx=".5" cy=".3" r=".8"><stop offset="0" stop-color="#ffd54a"/><stop offset=".5" stop-color="#ff7a2e"/><stop offset="1" stop-color="#e3245a"/></radialGradient></defs><path d="M17 33 C8 33 2 26 2 18 C2 12 5 8 8 6 C8 9 9 11 11 12 C12 7 16 3 21 2 C19 5 20 8 23 10 C28 12 32 15 32 20 C32 27 26 33 17 33Z" fill="url(#ffg)"/><circle cx="17" cy="19" r="7" fill="#7b3fd0"/><circle cx="18" cy="18" r="4" fill="#b84fe0"/></svg>
<svg style="left:915px;top:1034px" width="34" height="34" viewBox="0 0 34 34"><circle cx="17" cy="17" r="16" fill="#6a1bd0"/><path d="M7 17 C7 12 13 12 17 17 C21 22 27 22 27 17 C27 12 21 12 17 17 C13 22 7 22 7 17Z" fill="none" stroke="#fff" stroke-width="3.5"/><circle cx="25" cy="25" r="6" fill="#ff8a3a"/></svg>
<div class="a" style="left:972px;top:1076px;width:57px;height:4px;background:#8ab4de"></div>
<svg style="left:984px;top:1035px" width="34" height="34" viewBox="0 0 34 34"><circle cx="16" cy="16" r="15" fill="#2a2a2a" stroke="#bbb" stroke-width="1.5"/><circle cx="16" cy="9" r="5" fill="#fff" opacity=".85"/><circle cx="10" cy="20" r="5" fill="#fff" opacity=".85"/><circle cx="22" cy="20" r="5" fill="#fff" opacity=".85"/><circle cx="16" cy="16" r="4" fill="#2a2a2a"/><circle cx="25" cy="26" r="7" fill="#e8101a"/></svg>
<div class="a" style="left:1035px;top:1024px;width:68px;height:56px;background:#3f4d5c"></div>
<div class="a" style="left:1035px;top:1076px;width:68px;height:4px;background:#8ab4de"></div>
<svg style="left:1051px;top:1035px" width="36" height="32" viewBox="0 0 36 32"><ellipse cx="16" cy="19" rx="15" ry="11" fill="#e8eef2" stroke="#c8d4da"/><circle cx="8" cy="16" r="3" fill="#3a9ad9"/><circle cx="15" cy="12" r="3" fill="#f1c232"/><circle cx="10" cy="24" r="2.6" fill="#e04444"/><circle cx="19" cy="23" r="3" fill="#4fb04f"/><path d="M24 24 L31 4 L34 5 L27 25Z" fill="#c9924a"/><path d="M30 4 L32 0 L35 2 L33 6Z" fill="#d8d8d8"/></svg>
<!-- tray -->
<svg style="left:1229px;top:1040px" width="32" height="24" viewBox="0 0 32 24"><rect x="0" y="0" width="32" height="24" rx="2" fill="#34b4d8"/><rect x="4" y="4" width="4" height="14" fill="#e8f4fc"/><rect x="11" y="12" width="4" height="6" fill="#e8f4fc"/><rect x="18" y="12" width="4" height="6" fill="#e8f4fc"/><rect x="24" y="4" width="4" height="14" fill="#e8f4fc"/></svg>
<svg style="left:1507px;top:1044px" width="18" height="11" viewBox="0 0 18 11"><path d="M1.5 10 L9 2 L16.5 10" fill="none" stroke="#fff" stroke-width="1.6"/></svg>
<svg style="left:1539px;top:1043px" width="24" height="14" viewBox="0 0 24 14"><rect x="1" y="1" width="19" height="12" fill="none" stroke="#fff" stroke-width="1.5"/><rect x="3" y="3" width="7" height="8" fill="#fff"/><rect x="21" y="4.5" width="2.5" height="5" fill="#fff"/></svg>
<svg style="left:1571px;top:1042px" width="27" height="17" viewBox="0 0 27 17"><path d="M6 16 C1 16 0 11 3 9 C3 5 7 3 10 5 C12 1 19 1 21 6 C25 6 27 9 26 12 C26 15 24 16 22 16Z" fill="#2d8fe0"/></svg>
<svg style="left:1608px;top:1037px" width="17" height="28" viewBox="0 0 17 28"><rect x="4" y="1" width="9" height="17" rx="4.5" fill="#fff"/><path d="M1.5 13 C1.5 19 4 21.5 8.5 21.5 C13 21.5 15.5 19 15.5 13" fill="none" stroke="#fff" stroke-width="1.6"/><path d="M8.5 21.5 V26 M4 26.5 H13" stroke="#fff" stroke-width="1.6"/></svg>
<svg style="left:1642px;top:1040px" width="24" height="22" viewBox="0 0 24 22"><path d="M2 20 A18 18 0 0 1 20 2 M6 20 A14 14 0 0 1 20 6 M10 20 A10 10 0 0 1 20 10 M14 20 A6 6 0 0 1 20 14" fill="none" stroke="#fff" stroke-width="1.6"/><circle cx="19" cy="19" r="2" fill="#fff"/></svg>
<svg style="left:1673px;top:1040px" width="26" height="23" viewBox="0 0 26 23"><path d="M1 8 H6 L12 2 V21 L6 15 H1Z" fill="none" stroke="#fff" stroke-width="1.6"/><path d="M15 8 C17 10 17 13 15 15 M18 5 C21 8 21 15 18 18 M21 2 C26 7 26 16 21 21" fill="none" stroke="#fff" stroke-width="1.5"/></svg>
<svg style="left:1711px;top:1036px" width="30" height="30" viewBox="0 0 30 30"><path d="M3 27 C6 24 8 20 11 16 C15 10 20 4 24 3 C27 3 26 7 22 11 C18 15 12 18 8 20 M12 22 C16 20 22 20 24 22 C26 24 22 26 18 25" fill="none" stroke="#fff" stroke-width="1.7"/></svg>
<svg style="left:1861px;top:1039px" width="26" height="26" viewBox="0 0 26 26"><path d="M1.5 1.5 H24.5 V18.5 H14 L9 23.5 V18.5 H1.5Z" fill="none" stroke="#fff" stroke-width="1.6"/></svg>
<div class="a" style="left:1912px;top:1024px;width:1px;height:56px;background:#56606c"></div>

<div class="a" style="left:633px;top:256.8px;width:1245px;font-size:23px;font-weight:bold;color:#111;line-height:1;text-align:justify;text-align-last:justify;white-space:nowrap;letter-spacing:-0.33px">Una grúa tiene que remolcar un coche averiado. ¿Qué fuerza tiene que ejercer la maquinaria de dicha grúa, si el</div>
<div class="a" style="left:633px;top:287px;font-size:23px;font-weight:bold;color:#111;line-height:1;white-space:nowrap;letter-spacing:-0.33px">brazo de la grúa es de 3 m, la maquinaria está a 0,5 m y el coche pesa 1500 Kg?</div>

<span class="t" style="left:27.8px;top:7.4px;font-size:17.4px;color:#1a1a1a;letter-spacing:-0.404px;">ProblemaPalanca03.jpg - Paint</span>
<span class="t" style="left:11.9px;top:41.8px;font-size:15.5px;color:#ffffff;letter-spacing:0.497px;">Archivo</span>
<span class="t" style="left:97.9px;top:41.8px;font-size:15.5px;color:#3a3a3a;letter-spacing:0.797px;">Inicio</span>
<span class="t" style="left:177.9px;top:41.8px;font-size:15.5px;color:#3a3a3a;letter-spacing:0.202px;">Ver</span>
<span class="t" style="left:16.4px;top:128.2px;font-size:15px;color:#3c3c3c;letter-spacing:0.517px;">Pegar</span>
<span class="t" style="left:98.0px;top:80.2px;font-size:15px;color:#a6a6a6;letter-spacing:0.883px;">Cortar</span>
<span class="t" style="left:98.0px;top:111.2px;font-size:15px;color:#a6a6a6;letter-spacing:0.983px;">Copiar</span>
<span class="t" style="left:31.9px;top:174.2px;font-size:15px;color:#5a5a5a;letter-spacing:0.609px;">Portapapeles</span>
<span class="t" style="left:169.9px;top:128.2px;font-size:15px;color:#3c3c3c;letter-spacing:0.371px;">Seleccionar</span>
<span class="t" style="left:286.4px;top:80.2px;font-size:15px;color:#a6a6a6;letter-spacing:0.581px;">Recortar</span>
<span class="t" style="left:286.4px;top:111.2px;font-size:15px;color:#3c3c3c;letter-spacing:0.593px;">Cambiar tamaño</span>
<span class="t" style="left:286.4px;top:142.2px;font-size:15px;color:#3c3c3c;letter-spacing:0.564px;">Girar</span>
<span class="t" style="left:260.9px;top:174.2px;font-size:15px;color:#5a5a5a;letter-spacing:0.811px;">Imagen</span>
<span class="t" style="left:425.9px;top:173.8px;font-size:15px;color:#5a5a5a;letter-spacing:0.552px;">Herramientas</span>
<span class="t" style="left:541.0px;top:127.8px;font-size:15px;color:#3c3c3c;letter-spacing:0.200px;">Pinceles</span>
<span class="t" style="left:764.5px;top:173.8px;font-size:15px;color:#5a5a5a;letter-spacing:0.351px;">Formas</span>
<span class="t" style="left:876.0px;top:79.8px;font-size:15px;color:#a6a6a6;letter-spacing:1.197px;">Contorno</span>
<span class="t" style="left:876.0px;top:111.2px;font-size:15px;color:#a6a6a6;letter-spacing:0.532px;">Rellenar</span>
<span class="t" style="left:982.0px;top:127.8px;font-size:15px;color:#3c3c3c;letter-spacing:0.745px;">Tamaño</span>
<span class="t" style="left:1066.5px;top:127.8px;font-size:15px;color:#3c3c3c;letter-spacing:1.060px;">Color</span>
<span class="t" style="left:1082.0px;top:145.8px;font-size:15px;color:#3c3c3c;">1</span>
<span class="t" style="left:1126.0px;top:127.8px;font-size:15px;color:#3c3c3c;letter-spacing:1.060px;">Color</span>
<span class="t" style="left:1141.0px;top:145.8px;font-size:15px;color:#3c3c3c;">2</span>
<span class="t" style="left:1273.0px;top:174.2px;font-size:15px;color:#5a5a5a;letter-spacing:0.735px;">Colores</span>
<span class="t" style="left:1492.0px;top:127.8px;font-size:15px;color:#3c3c3c;letter-spacing:0.983px;">Editar</span>
<span class="t" style="left:1488.0px;top:146.2px;font-size:15px;color:#3c3c3c;letter-spacing:0.790px;">colores</span>
<span class="t" style="left:1563.0px;top:127.8px;font-size:15px;color:#3c3c3c;letter-spacing:0.728px;">Editar con</span>
<span class="t" style="left:1569.0px;top:146.2px;font-size:15px;color:#3c3c3c;letter-spacing:0.508px;">Paint 3D</span>
<span class="t" style="left:30.4px;top:998.6px;font-size:16px;color:#333;letter-spacing:-0.164px;">390, 99 píxeles</span>
<span class="t" style="left:471.4px;top:998.9px;font-size:16px;color:#333;letter-spacing:-0.055px;">1360 × 533 píxeles</span>
<span class="t" style="left:691.4px;top:998.9px;font-size:16px;color:#333;letter-spacing:-0.081px;">Tamaño: 65,2KB</span>
<span class="t" style="left:1671.4px;top:998.9px;font-size:16px;color:#333;letter-spacing:-0.394px;">100%</span>
<span class="t" style="left:123.0px;top:1042.8px;font-size:20px;color:#555;letter-spacing:0.233px;">Escribe aquí para buscar.</span>
<span class="t" style="left:1272.6px;top:1042.4px;font-size:20px;color:#f0f0f0;letter-spacing:-0.405px;">El Ibex modera las pé...</span>
<span class="t" style="left:1774.9px;top:1031.2px;font-size:16px;color:#f0f0f0;letter-spacing:0.298px;">20:30</span>
<span class="t" style="left:1753.9px;top:1056.7px;font-size:16px;color:#f0f0f0;letter-spacing:0.462px;">03/02/2025</span>
</body></html>
